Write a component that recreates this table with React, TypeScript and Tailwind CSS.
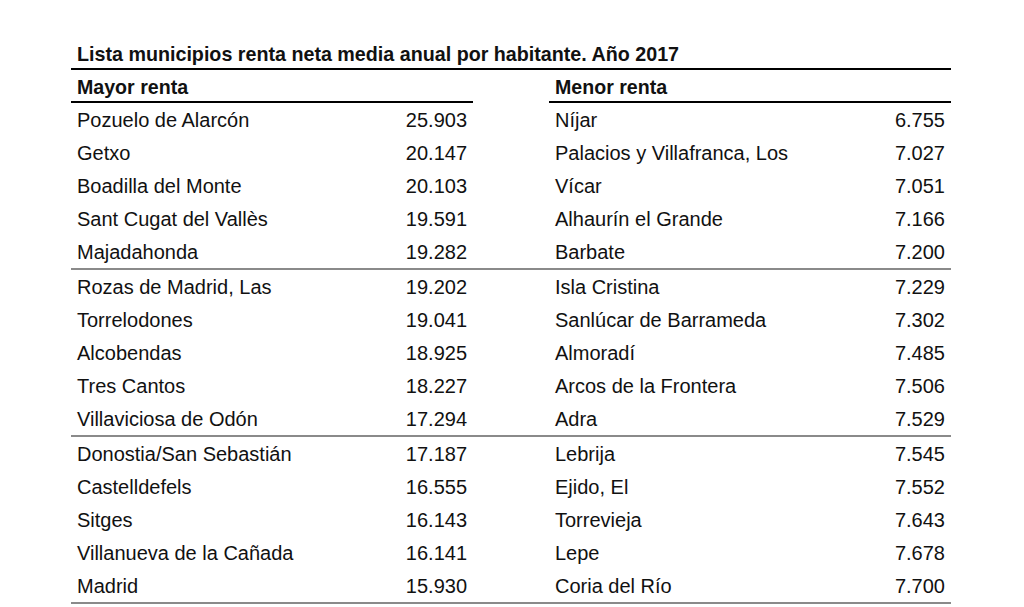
const mayor: [string, string][] = [
  ['Pozuelo de Alarcón', '25.903'],
  ['Getxo', '20.147'],
  ['Boadilla del Monte', '20.103'],
  ['Sant Cugat del Vallès', '19.591'],
  ['Majadahonda', '19.282'],
  ['Rozas de Madrid, Las', '19.202'],
  ['Torrelodones', '19.041'],
  ['Alcobendas', '18.925'],
  ['Tres Cantos', '18.227'],
  ['Villaviciosa de Odón', '17.294'],
  ['Donostia/San Sebastián', '17.187'],
  ['Castelldefels', '16.555'],
  ['Sitges', '16.143'],
  ['Villanueva de la Cañada', '16.141'],
  ['Madrid', '15.930'],
]

const menor: [string, string][] = [
  ['Níjar', '6.755'],
  ['Palacios y Villafranca, Los', '7.027'],
  ['Vícar', '7.051'],
  ['Alhaurín el Grande', '7.166'],
  ['Barbate', '7.200'],
  ['Isla Cristina', '7.229'],
  ['Sanlúcar de Barrameda', '7.302'],
  ['Almoradí', '7.485'],
  ['Arcos de la Frontera', '7.506'],
  ['Adra', '7.529'],
  ['Lebrija', '7.545'],
  ['Ejido, El', '7.552'],
  ['Torrevieja', '7.643'],
  ['Lepe', '7.678'],
  ['Coria del Río', '7.700'],
]

function Row({ name, value }: { name: string; value: string }) {
  return (
    <div className="flex h-[33px] items-center justify-between px-[6px] leading-[24px]">
      <span>{name}</span>
      <span>{value}</span>
    </div>
  )
}

export default function App() {
  const groups = [0, 5, 10]

  return (
    <div className="min-h-[607px] bg-white font-['Liberation_Sans',Arial,sans-serif] text-[20px] text-[#111]">
      <div className="ml-[71px] w-[880px] pt-[43px]">
        <div className="border-b-2 border-black px-[6px] pb-[3px] text-[19.7px] font-bold leading-[22px]">
          Lista municipios renta neta media anual por habitante. Año 2017
        </div>
        <div className="grid grid-cols-[402px_402px] gap-x-[76px]">
          <div className="border-b-2 border-black px-[6px] pt-[5px] pb-[2px] text-[19.6px] font-bold leading-[24px]">
            Mayor renta
          </div>
          <div className="border-b-2 border-black px-[6px] pt-[5px] pb-[2px] text-[19.6px] font-bold leading-[24px]">
            Menor renta
          </div>
        </div>
        {groups.map((start) => (
          <div
            key={start}
            className="grid grid-cols-[402px_402px] gap-x-[76px] border-b-2 border-[#8a8a8a]"
          >
            <div>
              {mayor.slice(start, start + 5).map(([n, v]) => (
                <Row key={n} name={n} value={v} />
              ))}
            </div>
            <div>
              {menor.slice(start, start + 5).map(([n, v]) => (
                <Row key={n} name={n} value={v} />
              ))}
            </div>
          </div>
        ))}
      </div>
    </div>
  )
}
